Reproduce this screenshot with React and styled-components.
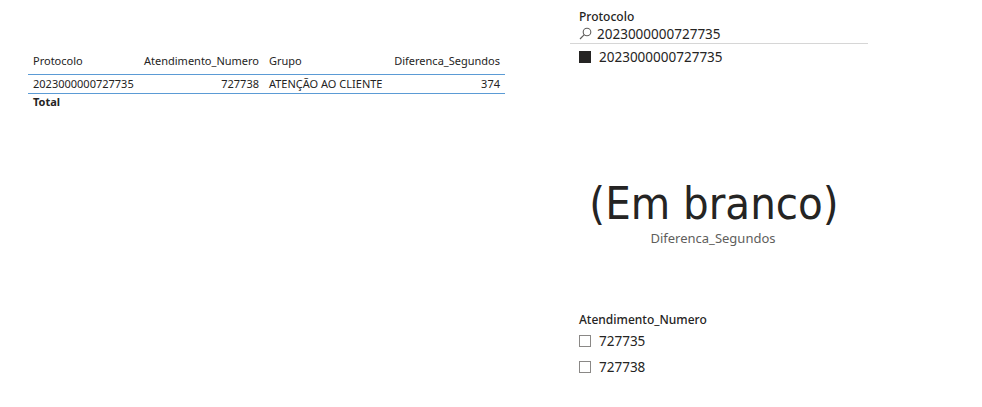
import React from 'react';
import styled, { createGlobalStyle } from 'styled-components';

const GlobalStyle = createGlobalStyle`
  html, body { margin: 0; padding: 0; background: #ffffff; }
  body { font-family: "Segoe UI", "Noto Sans", "Open Sans", sans-serif; color: #252423; }
`;

const Page = styled.div`
  width: 982px;
  height: 407px;
  display: grid;
  grid-template-columns: 570px 298px;
`;

const LeftPane = styled.div`
  padding: 50px 0 0 28px;
`;

const Table = styled.table`
  width: 477px;
  table-layout: fixed;
  border-collapse: collapse;
  font-family: "Segoe UI", "Noto Sans", sans-serif;
  font-size: 11px;
  color: #252423;
`;

const Th = styled.th`
  box-sizing: border-box;
  width: ${p => p.$w};
  font-weight: 400;
  text-align: ${p => (p.$right ? 'right' : 'left')};
  padding: 2px 5px 5px;
  height: 24px;
  border-bottom: 1px solid #5b9bd5;
  white-space: nowrap;
`;

const Td = styled.td`
  text-align: ${p => (p.$right ? 'right' : 'left')};
  padding: 1px 5px 1px;
  height: 16px;
  border-bottom: 1px solid #5b9bd5;
  white-space: nowrap;
`;

const TotalCell = styled.td`
  font-weight: 700;
  padding: 0 5px;
  height: 15px;
`;

const RightPane = styled.div`
  display: flex;
  flex-direction: column;
`;

const Slicer = styled.div`
  padding: ${p => p.$pad || '0'};
  display: flex;
  flex-direction: column;
`;

const SlicerTitle = styled.div`
  font-size: 12px;
  font-weight: 500;
  color: #252423;
  padding-left: 9px;
  height: 17px;
  line-height: 17px;
`;

const SearchRow = styled.div`
  display: flex;
  align-items: center;
  gap: 5px;
  padding-left: 9px;
  height: 17px;
  border-bottom: 1px solid #d6d6d6;
  font-size: 13.5px;
  padding-bottom: 1px;
`;

const Item = styled.div`
  display: flex;
  align-items: center;
  gap: 8px;
  padding-left: 9px;
  height: ${p => p.$h || '26px'};
  font-size: 13.5px;
`;

const Box = styled.span`
  width: 12px;
  height: 12px;
  box-sizing: border-box;
  background: ${p => (p.$checked ? '#252423' : '#ffffff')};
  border: 1px solid ${p => (p.$checked ? '#252423' : '#8a8886')};
`;

const Card = styled.div`
  height: 241px;
  display: flex;
  flex-direction: column;
  align-items: center;
  justify-content: flex-start;
  padding: 108px 12px 0 0;
  box-sizing: border-box;
`;

const CardValue = styled.div`
  font-family: "DejaVu Sans Condensed", "DejaVu Sans", sans-serif;
  font-size: 45px;
  line-height: 52px;
  color: #252423;
  padding-left: 2px;
`;

const CardLabel = styled.div`
  font-size: 13px;
  color: #605e5c;
  line-height: 16px;
`;

const SearchIcon = () => (
  <svg width="13" height="13" viewBox="0 0 13 13" fill="none">
    <circle cx="8" cy="5" r="3.8" stroke="#605e5c" strokeWidth="1.1" />
    <line x1="5.3" y1="7.7" x2="1" y2="12" stroke="#605e5c" strokeWidth="1.2" />
  </svg>
);

export default function App() {
  return (
    <>
      <GlobalStyle />
      <Page>
        <LeftPane>
          <Table>
            <thead>
              <tr>
                <Th $w="111px">Protocolo</Th>
                <Th $w="125px" $right>Atendimento_Numero</Th>
                <Th $w="125px">Grupo</Th>
                <Th $w="116px" $right>Diferenca_Segundos</Th>
              </tr>
            </thead>
            <tbody>
              <tr>
                <Td>2023000000727735</Td>
                <Td $right>727738</Td>
                <Td>ATENÇÃO AO CLIENTE</Td>
                <Td $right>374</Td>
              </tr>
              <tr>
                <TotalCell>Total</TotalCell>
                <TotalCell />
                <TotalCell />
                <TotalCell />
              </tr>
            </tbody>
          </Table>
        </LeftPane>
        <RightPane>
          <Slicer $pad="8px 0 0">
            <SlicerTitle>Protocolo</SlicerTitle>
            <SearchRow>
              <SearchIcon />
              <span>2023000000727735</span>
            </SearchRow>
            <Item>
              <Box $checked />
              <span>2023000000727735</span>
            </Item>
          </Slicer>
          <Card>
            <CardValue>(Em branco)</CardValue>
            <CardLabel>Diferenca_Segundos</CardLabel>
          </Card>
          <Slicer>
            <SlicerTitle>Atendimento_Numero</SlicerTitle>
            <Item>
              <Box />
              <span>727735</span>
            </Item>
            <Item>
              <Box />
              <span>727738</span>
            </Item>
          </Slicer>
        </RightPane>
      </Page>
    </>
  );
}
